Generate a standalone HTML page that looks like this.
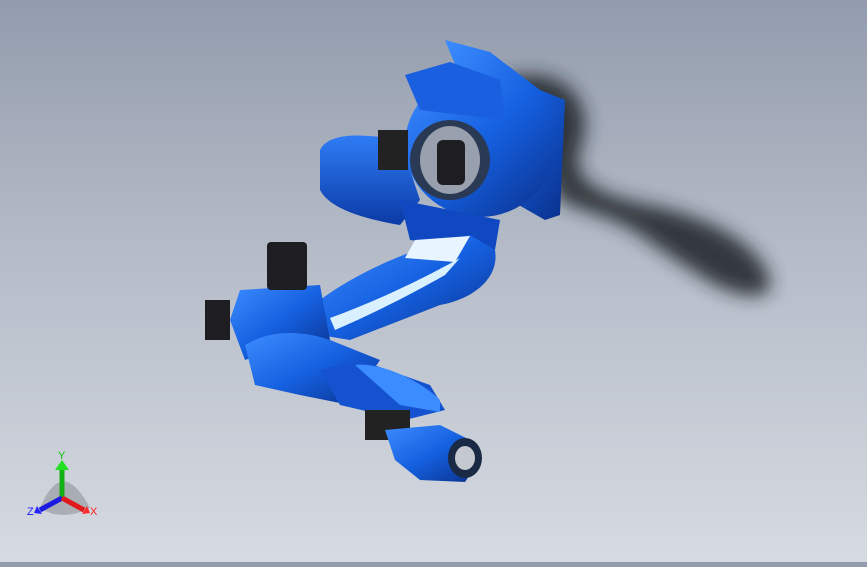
<!DOCTYPE html>
<html><head><style>
html,body{margin:0;padding:0;}
body{width:867px;height:562px;overflow:hidden;background:linear-gradient(180deg,#939cad 0%,#b5bcc8 45%,#d6dae1 100%);font-family:"Liberation Sans",sans-serif;}
</style></head><body>
<svg width="867" height="562" viewBox="0 0 867 562" xmlns="http://www.w3.org/2000/svg">
<defs>
<filter id="b" x="-30%" y="-30%" width="160%" height="160%"><feGaussianBlur stdDeviation="9"/></filter>
<linearGradient id="bl" x1="0" y1="0" x2="1" y2="1"><stop offset="0" stop-color="#3d8cff"/><stop offset="0.5" stop-color="#1560e0"/><stop offset="1" stop-color="#0a2f8a"/></linearGradient>
<linearGradient id="bl2" x1="0" y1="0" x2="0" y2="1"><stop offset="0" stop-color="#2f7cf5"/><stop offset="1" stop-color="#0b3aa5"/></linearGradient>
</defs>
<!-- shadow -->
<g filter="url(#b)" fill="#1d2128" opacity="0.85">
<path d="M500 80 C560 60 600 100 580 150 C570 180 600 195 650 205 C700 215 760 240 770 280 C775 300 745 300 715 285 C690 270 660 250 640 235 C610 215 575 210 560 200 Z"/>
</g>
<!-- base -->
<path d="M445 40 L490 52 L540 90 L565 100 L560 215 L545 220 L510 200 Z" fill="url(#bl)"/>
<ellipse cx="480" cy="145" rx="75" ry="72" fill="url(#bl)"/>
<path d="M405 75 L450 62 L500 80 L505 120 L420 110 Z" fill="#1a5fe0"/>
<ellipse cx="450" cy="160" rx="40" ry="40" fill="#2a3a55"/>
<ellipse cx="450" cy="160" rx="30" ry="34" fill="#98a0ad"/>
<rect x="437" y="140" width="28" height="45" rx="6" fill="#1e1e22"/>
<path d="M320 150 C330 130 370 135 400 140 L420 200 L400 225 C370 220 330 210 320 190 Z" fill="url(#bl2)"/>
<rect x="378" y="130" width="30" height="40" fill="#222"/>
<path d="M400 200 L500 220 L495 250 L410 240 Z" fill="#0f48c0"/>
<!-- upper arm -->
<path d="M320 300 C360 270 420 245 470 235 L495 250 C500 280 470 300 440 305 L350 340 L320 335 Z" fill="url(#bl)"/>
<path d="M330 318 C380 300 430 275 460 258 L445 275 C410 295 370 315 335 330 Z" fill="#d8f0ff"/>
<path d="M415 240 L470 236 L455 262 L405 258 Z" fill="#e8f4ff"/>
<!-- elbow -->
<path d="M240 290 L320 285 L330 340 L290 345 L245 360 L230 320 Z" fill="url(#bl)"/>
<rect x="267" y="242" width="40" height="48" rx="4" fill="#1e1e22"/>
<rect x="205" y="300" width="25" height="40" fill="#1e1e22"/>
<!-- forearm -->
<path d="M245 345 C270 330 300 330 330 340 L380 360 L350 405 L300 395 L255 385 Z" fill="url(#bl)"/>
<path d="M320 370 L360 360 L430 385 L445 410 L405 420 L340 405 Z" fill="#1452d0"/>
<path d="M355 365 C380 362 420 380 440 400 L440 412 L400 405 Z" fill="#3b8cff"/>
<rect x="365" y="410" width="45" height="30" fill="#222"/>
<!-- wrist -->
<path d="M385 430 L440 425 L470 440 L480 460 L465 482 L420 480 L395 460 Z" fill="url(#bl)"/>
<ellipse cx="465" cy="458" rx="17" ry="20" fill="#1a2a44"/>
<ellipse cx="465" cy="458" rx="10" ry="12" fill="#c4c8cf"/>
<!-- triad -->
<path d="M40 508 Q62 455 90 508 Q62 522 40 508 Z" fill="#000" opacity="0.18"/>
<line x1="62" y1="498" x2="62" y2="468" stroke="#12b012" stroke-width="5"/>
<path d="M55 470 L62 460 L69 470 Z" fill="#22e022"/>
<line x1="62" y1="498" x2="40" y2="510" stroke="#1a1ae0" stroke-width="5"/>
<path d="M37 506 L34 513 L42 514 Z" fill="#2525ff"/>
<line x1="62" y1="498" x2="84" y2="510" stroke="#e01a1a" stroke-width="5"/>
<path d="M87 506 L90 513 L82 514 Z" fill="#ff2a2a"/>
<text x="58" y="459" font-size="11" fill="#10c010">Y</text>
<text x="27" y="515" font-size="11" fill="#1a1aff">Z</text>
<text x="90" y="515" font-size="11" fill="#ff2020">X</text>
</svg>
</body></html>
